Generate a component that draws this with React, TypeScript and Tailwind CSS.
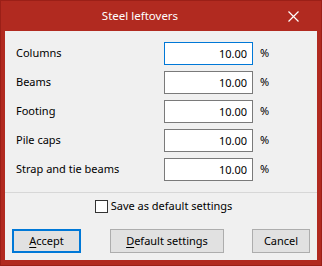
import React, { useState } from 'react';

const rows = ['Columns', 'Beams', 'Footing', 'Pile caps', 'Strap and tie beams'];

const SteelLeftovers: React.FC = () => {
  const [values, setValues] = useState<string[]>(rows.map(() => '10.00'));
  const [saveDefault, setSaveDefault] = useState(false);

  const handleChange = (i: number, value: string) => {
    setValues(prev => prev.map((v, idx) => (idx === i ? value : v)));
  };

  return (
    <div className="w-[322px] h-[266px] bg-[#b12a20] border border-[#9b1f17] flex flex-col font-['Noto_Sans',sans-serif] text-[11px] text-black select-none">
      {/* Title bar */}
      <div className="h-[30px] flex items-center shrink-0">
        <div className="flex-1 text-center text-white text-[11.5px] pl-[4px]">Steel leftovers</div>
        <div className="w-[46px] h-full flex items-center justify-center pr-[10px]">
          <svg width="11" height="11" viewBox="0 0 11 11" fill="none" stroke="white" strokeWidth="1.2">
            <path d="M0.5 0.5 L10.5 10.5 M10.5 0.5 L0.5 10.5" />
          </svg>
        </div>
      </div>

      {/* Body */}
      <div className="flex-1 mx-[4px] mb-[5px] bg-[#f0f0f0] flex flex-col">
        <div className="flex flex-col gap-[6px] pt-[11px] pl-[11px]">
          {rows.map((label, i) => (
            <div key={label} className="flex items-center h-[23px]">
              <span className="w-[148px]">{label}</span>
              <input
                value={values[i]}
                onChange={e => handleChange(i, e.target.value)}
                className={`w-[89px] h-[23px] bg-white border text-right pr-[5px] outline-none ${i === 0 ? 'border-[#0078d7]' : 'border-[#7a7a7a]'}`}
              />
              <span className="ml-[7px]">%</span>
            </div>
          ))}
        </div>

        <div className="mt-[11px] border-t border-[#d7d7d7]" />

        <label className="flex items-center justify-center gap-[3px] mt-[6px] h-[14px] pl-[5px]">
          <input
            type="checkbox"
            checked={saveDefault}
            onChange={e => setSaveDefault(e.target.checked)}
            className="appearance-none w-[13px] h-[13px] bg-white border border-[#333333] m-0"
          />
          <span>Save as default settings</span>
        </label>

        <div className="flex items-center mt-[16px] pl-[7px]">
          <button className="w-[69px] h-[24px] bg-[#e1e1e1] border-2 border-[#0078d7]">
            <span className="underline underline-offset-2">A</span>ccept
          </button>
          <button className="ml-[29px] w-[114px] h-[24px] bg-[#e1e1e1] border border-[#adadad]">
            <span className="underline underline-offset-2">D</span>efault settings
          </button>
          <button className="ml-[28px] w-[58px] h-[24px] bg-[#e1e1e1] border border-[#adadad]">Cancel</button>
        </div>
      </div>
    </div>
  );
};

export default function App() {
  return <SteelLeftovers />;
}
